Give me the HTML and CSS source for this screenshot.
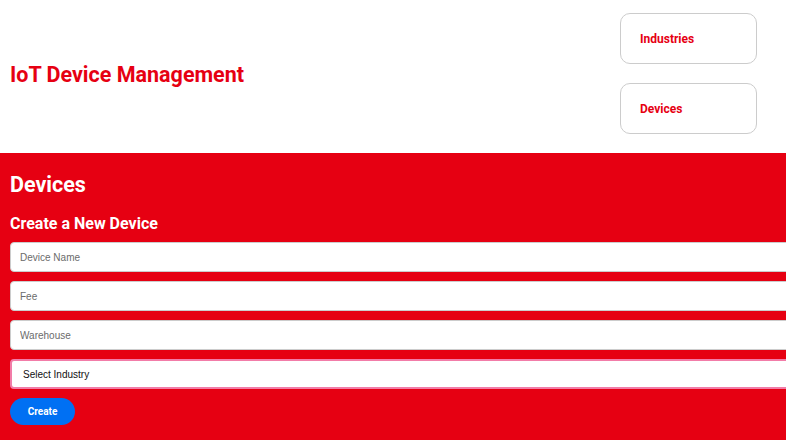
FILE: index.html
```html
<!DOCTYPE html>
<html lang="en">
  <head>
    <meta charset="UTF-8" />
    <meta name="viewport" content="width=device-width, initial-scale=1.0" />
    <title>IoT Device Management</title>
    <link rel="stylesheet" href="styles.css">
  </head>
  <body>
    <header class="topBar">
      <h1 class="appTitle">IoT Device Management</h1>
      <nav class="navList">
        <a class="navItem" href="#">Industries</a>
        <a class="navItem" href="#">Devices</a>
      </nav>
    </header>

    <section class="devicePanel">
      <h2 class="panelTitle">Devices</h2>
      <h3 class="formTitle">Create a New Device</h3>
      <form class="deviceForm">
        <input class="field" type="text" placeholder="Device Name" />
        <input class="field" type="text" placeholder="Fee" />
        <input class="field" type="text" placeholder="Warehouse" />
        <select class="field selectField">
          <option>Select Industry</option>
        </select>
        <button type="button" class="createBtn">Create</button>
      </form>
    </section>
  </body>
</html>
```

FILE: styles.css
```css
body {
  margin: 0;
  font-family: Roboto, "Liberation Sans", sans-serif;
  background-color: #e60012;
  overflow: hidden;
}

.topBar {
  display: flex;
  align-items: center;
  justify-content: space-between;
  background-color: #ffffff;
  padding: 13px 29px 19px 10px;
}

.appTitle {
  margin: 2px 0 0;
  font-size: 21.5px;
  font-weight: 700;
  color: #e60012;
}

.navList {
  display: flex;
  flex-direction: column;
  gap: 19px;
}

.navItem {
  display: flex;
  align-items: center;
  box-sizing: border-box;
  width: 137px;
  height: 51px;
  padding-left: 19px;
  border: 1px solid #cccccc;
  border-radius: 10px;
  color: #e60012;
  font-size: 12px;
  font-weight: 700;
  text-decoration: none;
}

.devicePanel {
  padding: 19px 10px 10px;
  color: #ffffff;
}

.panelTitle {
  margin: 0 0 17px;
  font-size: 21.5px;
  font-weight: 700;
}

.formTitle {
  margin: 0 0 9px;
  font-size: 16px;
  font-weight: 700;
}

.deviceForm {
  display: flex;
  flex-direction: column;
  align-items: flex-start;
  gap: 9px;
}

.field {
  width: calc(100% + 20px);
  height: 30px;
  padding: 0 9px;
  border: 1px solid #cccccc;
  border-radius: 4px;
  background-color: #ffffff;
  font-family: "Liberation Sans", Arial, sans-serif;
  font-size: 10px;
  color: #222222;
  box-sizing: border-box;
}

.field::placeholder {
  color: #6b6b6b;
}

.selectField {
  border: 2px solid #f27ca8;
  padding-left: 11px;
  color: #111111;
  appearance: none;
}

.createBtn {
  width: 65px;
  height: 27px;
  border: none;
  border-radius: 14px;
  background-color: #0070f3;
  color: #ffffff;
  font-family: Roboto, "Liberation Sans", sans-serif;
  font-size: 10px;
  font-weight: 700;
}
```
